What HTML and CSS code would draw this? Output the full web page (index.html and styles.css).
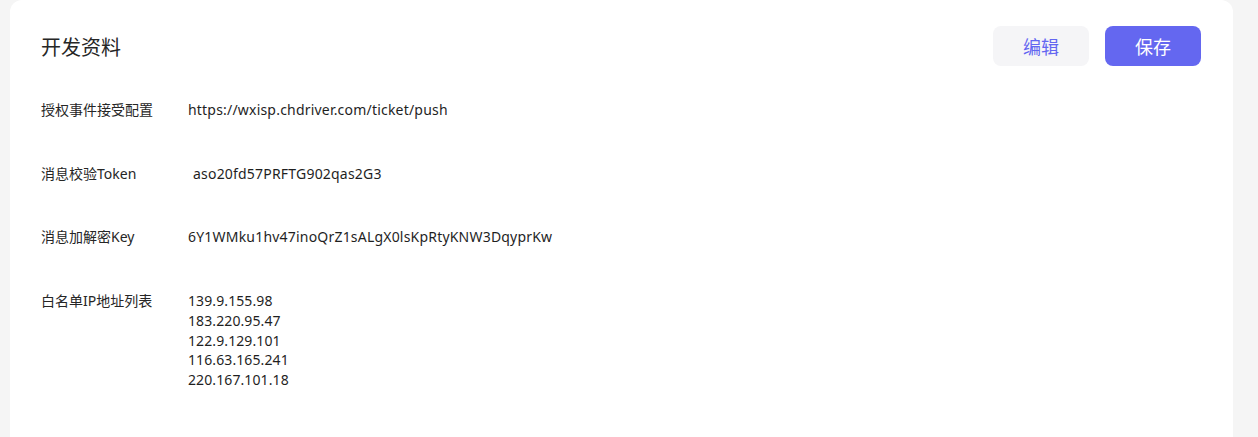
FILE: index.html
```html
<!DOCTYPE html>
<html lang="zh-CN">
<head>
<meta charset="utf-8">
<link rel="stylesheet" href="styles.css">
</head>
<body>
<div class="page">
  <section class="card">
    <header class="card-head">
      <h1 class="title">开发资料</h1>
      <div class="actions">
        <button class="btn btn-light">编辑</button>
        <button class="btn btn-primary">保存</button>
      </div>
    </header>
    <div class="info">
      <div class="label">授权事件接受配置</div>
      <div class="value">https://wxisp.chdriver.com/ticket/push</div>
      <div class="label">消息校验Token</div>
      <div class="value value-indent">aso20fd57PRFTG902qas2G3</div>
      <div class="label">消息加解密Key</div>
      <div class="value">6Y1WMku1hv47inoQrZ1sALgX0lsKpRtyKNW3DqyprKw</div>
      <div class="label">白名单IP地址列表</div>
      <div class="value ip-list">
        <div>139.9.155.98</div>
        <div>183.220.95.47</div>
        <div>122.9.129.101</div>
        <div>116.63.165.241</div>
        <div>220.167.101.18</div>
      </div>
    </div>
  </section>
</div>
</body>
</html>
```

FILE: styles.css
```css
* { box-sizing: border-box; }
html, body {
  margin: 0;
  padding: 0;
  background: #f5f5f5;
  height: 100%;
  overflow: hidden;
}
body {
  font-family: "Noto Sans", "Noto Sans CJK SC", sans-serif;
  color: #222;
}
.page {
  height: 100%;
  padding: 0 25px 0 10px;
}
.card {
  background: #fff;
  border-radius: 12px 12px 0 0;
  padding: 26px 32px 0 31px;
  height: 100%;
}
.card-head {
  display: flex;
  align-items: center;
  justify-content: space-between;
  height: 40px;
}
.title {
  margin: 0;
  font-size: 20px;
  font-weight: 400;
  color: #262626;
}
.actions {
  display: flex;
  gap: 16px;
}
.btn {
  width: 96px;
  height: 40px;
  border: none;
  border-radius: 8px;
  font-family: inherit;
  font-size: 18px;
  cursor: pointer;
}
.btn-light {
  background: #f5f5f7;
  color: #6366f1;
}
.btn-primary {
  background: #6467f0;
  color: #fff;
}
.info {
  margin-top: 34px;
  display: grid;
  grid-template-columns: 147px 1fr;
  row-gap: 43.7px;
  font-size: 14px;
  line-height: 20px;
}
.label {
  color: #262626;
}
.value {
  color: #1f1f1f;
  letter-spacing: 0.2px;
}
.value-indent {
  padding-left: 5px;
}
.ip-list {
  letter-spacing: 0.1px;
  line-height: 19.75px;
}
```
